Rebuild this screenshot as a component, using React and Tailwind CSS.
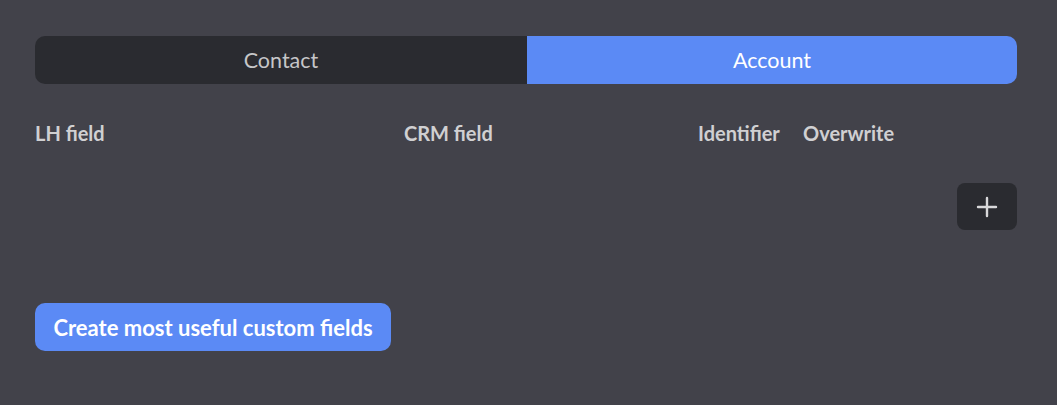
export default function App() {
  return (
    <div className="w-[1057px] h-[405px] bg-[#42424a] px-[35px] pt-[36px]" style={{ fontFamily: 'Lato, "Open Sans", sans-serif' }}>
      <div className="flex h-[48px] w-[982px] rounded-[10px] overflow-hidden">
        <div className="w-[492px] bg-[#2a2b30] flex items-center justify-center text-[21.5px] text-[#c6c6c8]">Contact</div>
        <div className="flex-1 bg-[#5b8af5] flex items-center justify-center text-[21.5px] text-white">Account</div>
      </div>
      <div className="grid grid-cols-[369px_294px_105px_1fr] mt-[37px] text-[20px] font-bold text-[#d0d0d2] leading-[24px]">
        <div>LH field</div>
        <div>CRM field</div>
        <div>Identifier</div>
        <div>Overwrite</div>
      </div>
      <div className="flex justify-end w-[982px] mt-[38px]">
        <button className="w-[60px] h-[47px] rounded-[8px] bg-[#2a2b30] flex items-center justify-center text-[#d8d8da]">
          <svg width="22" height="22" viewBox="0 0 22 22" fill="none" stroke="currentColor" strokeWidth="2.4" strokeLinecap="round">
            <path d="M11 2v18M2 11h18" />
          </svg>
        </button>
      </div>
      <button className="mt-[73px] w-[356px] h-[48px] rounded-[10px] bg-[#5b8af5] text-white text-[22px] font-bold flex items-center justify-center">
        Create most useful custom fields
      </button>
    </div>
  );
}
